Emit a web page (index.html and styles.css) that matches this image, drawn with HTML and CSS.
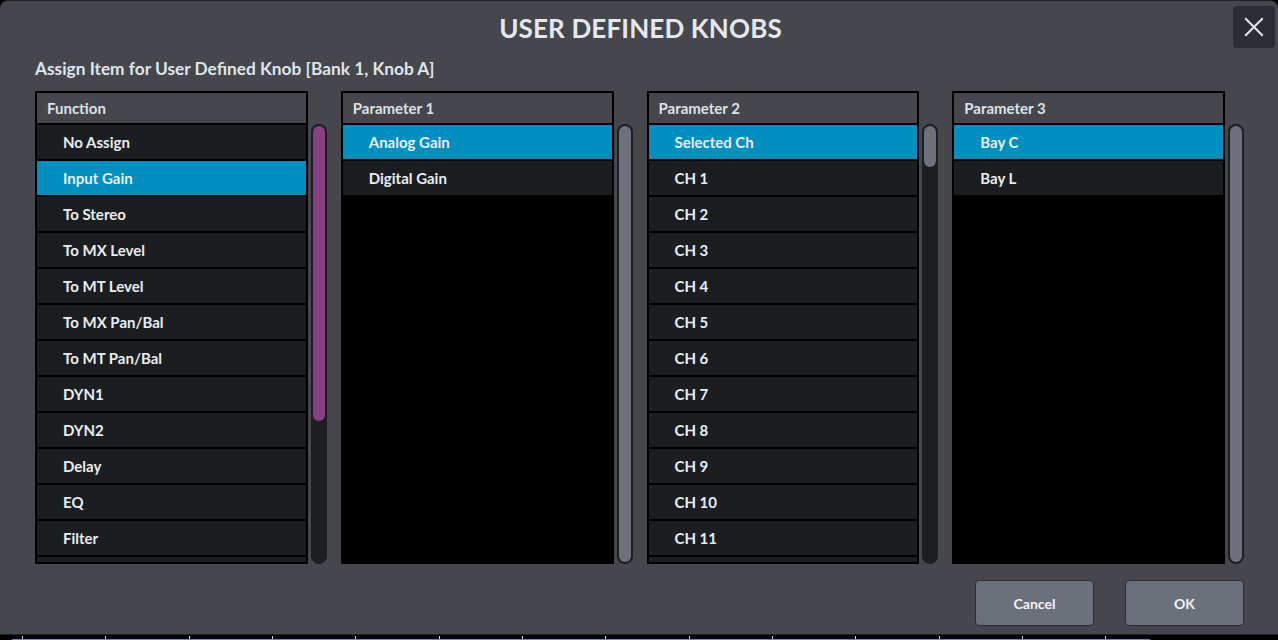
FILE: index.html
```html
<!DOCTYPE html>
<html lang="en">
<head>
<meta charset="utf-8">
<title>User Defined Knobs</title>
<link rel="stylesheet" href="styles.css">
</head>
<body>
<div class="screen">
  <div class="dialog">
    <header class="titlebar">
      <span class="spacer"></span>
      <h1 class="title">USER DEFINED KNOBS</h1>
      <button class="close" aria-label="Close">
        <svg width="20" height="20" viewBox="0 0 20 20"><path d="M2 2 L18 18 M18 2 L2 18" stroke="#dde1e6" stroke-width="2.2" stroke-linecap="square" fill="none"/></svg>
      </button>
    </header>
    <p class="subtitle">Assign Item for User Defined Knob [Bank 1, Knob A]</p>
    <div class="columns">
      <div class="col">
        <div class="list">
          <div class="list-head">Function</div>
          <ul class="rows">
            <li class="row">No Assign</li>
            <li class="row selected">Input Gain</li>
            <li class="row">To Stereo</li>
            <li class="row">To MX Level</li>
            <li class="row">To MT Level</li>
            <li class="row">To MX Pan/Bal</li>
            <li class="row">To MT Pan/Bal</li>
            <li class="row">DYN1</li>
            <li class="row">DYN2</li>
            <li class="row">Delay</li>
            <li class="row">EQ</li>
            <li class="row">Filter</li>
            <li class="row"></li>
          </ul>
        </div>
        <div class="track"><div class="thumb purple" style="height:295px"></div></div>
      </div>
      <div class="col">
        <div class="list">
          <div class="list-head">Parameter 1</div>
          <ul class="rows">
            <li class="row selected">Analog Gain</li>
            <li class="row">Digital Gain</li>
          </ul>
        </div>
        <div class="track"><div class="thumb full"></div></div>
      </div>
      <div class="col">
        <div class="list">
          <div class="list-head">Parameter 2</div>
          <ul class="rows">
            <li class="row selected">Selected Ch</li>
            <li class="row">CH 1</li>
            <li class="row">CH 2</li>
            <li class="row">CH 3</li>
            <li class="row">CH 4</li>
            <li class="row">CH 5</li>
            <li class="row">CH 6</li>
            <li class="row">CH 7</li>
            <li class="row">CH 8</li>
            <li class="row">CH 9</li>
            <li class="row">CH 10</li>
            <li class="row">CH 11</li>
            <li class="row"></li>
          </ul>
        </div>
        <div class="track"><div class="thumb" style="height:41px"></div></div>
      </div>
      <div class="col">
        <div class="list">
          <div class="list-head">Parameter 3</div>
          <ul class="rows">
            <li class="row selected">Bay C</li>
            <li class="row">Bay L</li>
          </ul>
        </div>
        <div class="track"><div class="thumb full"></div></div>
      </div>
    </div>
    <div class="actions">
      <button class="btn">Cancel</button>
      <button class="btn">OK</button>
    </div>
  </div>
  <div class="taskbar"><div class="taskbar-line"></div></div>
</div>
</body>
</html>
```
FILE: styles.css
```css
* { box-sizing: border-box; }
html, body {
  margin: 0;
  padding: 0;
  background: #000;
  overflow: hidden;
}
body {
  font-family: Lato, "Noto Sans", sans-serif;
  color: #e6ebf0;
}
.screen {
  width: 1278px;
  height: 640px;
  display: flex;
  flex-direction: column;
}
.dialog {
  height: 635px;
  flex: none;
  background: #45474c;
  border-top: 1px solid #1f2124;
  border-bottom: 1px solid #222428;
  border-radius: 8px 8px 0 0;
  display: flex;
  flex-direction: column;
}
.titlebar {
  display: grid;
  grid-template-columns: 1fr auto 1fr;
  align-items: center;
  padding: 4px 0 0 0;
  height: 51px;
  align-content: start;
  flex: none;
}
.title {
  margin: 0;
  font-size: 26px;
  font-weight: 700;
  color: #e4e8ed;
  line-height: 42px;
  padding-top: 2px;
  letter-spacing: 0.15px;
  padding-left: 3px;
}
.close {
  justify-self: end;
  margin-right: 3px;
  width: 42px;
  height: 42px;
  border: none;
  border-radius: 4px;
  background: #2a2d31;
  display: flex;
  align-items: center;
  justify-content: center;
  padding: 0;
}
.subtitle {
  margin: 7px 0 0 35px;
  font-size: 17.3px;
  font-weight: 700;
  line-height: 20px;
  color: #dfe4ea;
  flex: none;
}
.columns {
  margin-top: 12px;
  padding: 0 34px 0 35px;
  display: grid;
  grid-template-columns: repeat(4, minmax(0, 1fr));
  grid-template-rows: minmax(0, 1fr);
  column-gap: 14px;
  height: 473px;
  flex: none;
}
.col {
  display: flex;
  gap: 3px;
  min-width: 0;
  min-height: 0;
}
.list {
  flex: 1;
  min-width: 0;
  min-height: 0;
  border: 2px solid #000;
  background: #000;
  display: flex;
  flex-direction: column;
  overflow: hidden;
}
.list-head {
  height: 30px;
  flex: none;
  background: #45474c;
  border-bottom: 2px solid #000;
  box-sizing: content-box;
  padding-left: 10px;
  font-size: 15px;
  font-weight: 700;
  line-height: 30px;
  color: #dde2e8;
}
.rows {
  list-style: none;
  margin: 0;
  padding: 0;
  overflow: hidden;
  flex: 1;
  min-height: 0;
}
.row {
  height: 34px;
  margin-bottom: 2px;
  background: #1b1e21;
  padding-left: 26px;
  font-size: 15px;
  font-weight: 700;
  line-height: 34px;
  color: #e8edf2;
}
.row.selected {
  background: #008fbe;
}
.track {
  width: 16px;
  flex: none;
  margin-top: 33px;
  background: #1c1e21;
  border-radius: 8px;
  padding: 2px;
}
.thumb {
  width: 12px;
  border-radius: 6px;
  background: #6c717b;
}
.thumb.full { height: 100%; }
.thumb.purple { background: #8a3f82; }
.actions {
  margin-top: 16px;
  padding-right: 34px;
  display: flex;
  justify-content: flex-end;
  gap: 31px;
  flex: none;
}
.btn {
  width: 119px;
  height: 46px;
  background: #6b717b;
  border: 1px solid #2a2c30;
  border-radius: 4px;
  font-family: Lato, "Noto Sans", sans-serif;
  font-size: 14px;
  font-weight: 700;
  color: #f2f4f7;
  padding: 0;
}
.taskbar {
  flex: 1;
  background: #000;
  display: flex;
  flex-direction: column;
  justify-content: flex-end;
}
.taskbar-line {
  margin-left: 12px;
  width: 1138px;
  height: 4px;
  background:
    repeating-linear-gradient(90deg, transparent 0 10px, #d8dde2 10px 11px, transparent 11px 83.33px) 0 0 / 100% 3px no-repeat,
    linear-gradient(#5f8fc4, #5f8fc4) 0 100% / 100% 1px no-repeat;
}
```
